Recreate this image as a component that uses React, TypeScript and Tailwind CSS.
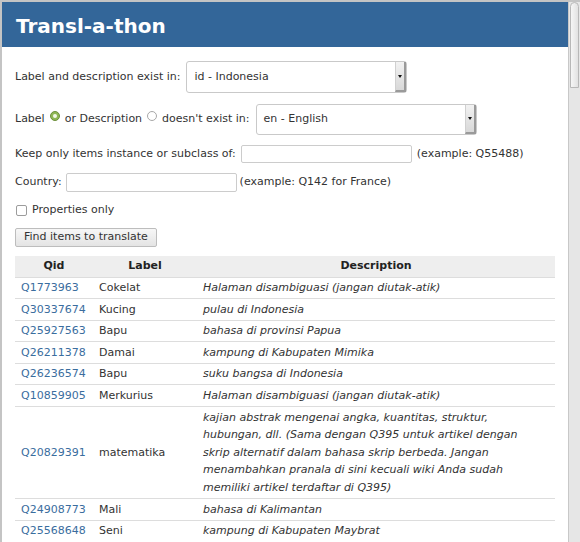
import { FC } from "react";

type Row = { qid: string; label: string; desc: string };

const rows: Row[] = [
  { qid: "Q1773963", label: "Cokelat", desc: "Halaman disambiguasi (jangan diutak-atik)" },
  { qid: "Q30337674", label: "Kucing", desc: "pulau di Indonesia" },
  { qid: "Q25927563", label: "Bapu", desc: "bahasa di provinsi Papua" },
  { qid: "Q26211378", label: "Damai", desc: "kampung di Kabupaten Mimika" },
  { qid: "Q26236574", label: "Bapu", desc: "suku bangsa di Indonesia" },
  { qid: "Q10859905", label: "Merkurius", desc: "Halaman disambiguasi (jangan diutak-atik)" },
  {
    qid: "Q20829391",
    label: "matematika",
    desc: "kajian abstrak mengenai angka, kuantitas, struktur, hubungan, dll. (Sama dengan Q395 untuk artikel dengan skrip alternatif dalam bahasa skrip berbeda. Jangan menambahkan pranala di sini kecuali wiki Anda sudah memiliki artikel terdaftar di Q395)",
  },
  { qid: "Q24908773", label: "Mali", desc: "bahasa di Kalimantan" },
  { qid: "Q25568648", label: "Seni", desc: "kampung di Kabupaten Maybrat" },
];

// fake GTK-ish select box
const Select: FC<{ value: string }> = ({ value }) => (
  <div className="flex h-full w-[221px] rounded-[3px] border border-[#c9c9c9] bg-white">
    <div className="flex flex-1 items-center pl-[7px] text-[11px] text-[#333]">{value}</div>
    <div className="flex w-[11px] items-center justify-center border-l border-[#d0d0d0] border-r-2 border-b-2 border-r-[#9a9a9a] border-b-[#9a9a9a] bg-gradient-to-b from-[#f2f2f2] to-[#d8d8d8]">
      <div className="h-0 w-0 border-x-[2.5px] border-t-[3px] border-x-transparent border-t-[#111]"></div>
    </div>
  </div>
);

const Radio: FC<{ checked?: boolean }> = ({ checked }) =>
  checked ? (
    <span className="relative -top-[3px] mx-[5px] inline-flex h-[10px] w-[10px] items-center justify-center rounded-full border border-[#6d8f3c] bg-[#8fb755] align-middle">
      <span className="h-[4px] w-[4px] rounded-full bg-[#f4f8ea]"></span>
    </span>
  ) : (
    <span className="relative -top-[3px] mx-[5px] inline-block h-[10px] w-[10px] rounded-full border border-[#a8a8a8] bg-white align-middle"></span>
  );

const Input: FC<{ h: string }> = ({ h }) => (
  <div className={`${h} w-[171px] rounded-[2px] border border-[#cccccc] bg-white`}></div>
);

const App: FC = () => {
  return (
    <div className="flex h-[542px] w-[580px] overflow-hidden border-l-2 border-t-2 border-[#c4c4c4] bg-white font-['DejaVu_Sans',sans-serif] text-[11px] text-[#333]">
      <div className="flex-1">
        <div className="flex h-[45px] items-center bg-[#336699] pl-[14px] pt-[2px] text-[20px] font-bold text-white">
          Transl-a-thon
        </div>

        <div className="px-[13px]">
          <div className="mt-[14px] flex h-[32px] items-center">
            <span className="mr-[6px]">Label and description exist in:</span>
            <Select value="id - Indonesia" />
          </div>

          <div className="mt-[11px] flex h-[31px] items-center">
            <span className="mr-[6px] whitespace-nowrap">
              Label
              <Radio checked />
              or Description
              <Radio />
              doesn't exist in:
            </span>
            <Select value="en - English" />
          </div>

          <div className="mt-[10px] flex h-[18px] items-center">
            <span className="mr-[5px]">Keep only items instance or subclass of:</span>
            <Input h="h-[18px]" />
            <span className="ml-[5px]">(example: Q55488)</span>
          </div>

          <div className="mt-[10px] flex h-[19px] items-center">
            <span className="mr-[4px]">Country:</span>
            <Input h="h-[19px]" />
            <span className="ml-[3px]">(example: Q142 for France)</span>
          </div>

          <div className="mt-[10px] flex h-[16px] items-center">
            <span className="ml-[1px] h-[11px] w-[11px] rounded-[2px] border border-[#9c9c9c] bg-white"></span>
            <span className="ml-[5px]">Properties only</span>
          </div>

          <button className="mt-[10px] h-[19px] w-[142px] rounded-[2px] border border-[#bdbdbd] bg-gradient-to-b from-[#f7f7f7] to-[#e4e4e4] pl-[1px] text-left text-[11px] text-[#333]">
            <span className="ml-[7px]">Find items to translate</span>
          </button>

          <table className="mt-[9px] w-[540px] table-fixed border-collapse leading-[17.6px]">
            <colgroup>
              <col className="w-[78px]" />
              <col className="w-[104px]" />
              <col />
            </colgroup>
            <thead>
              <tr className="h-[21px] bg-[#eeeeee] font-bold text-[#222]">
                <th className="text-center">Qid</th>
                <th className="text-center">Label</th>
                <th className="text-center">Description</th>
              </tr>
            </thead>
            <tbody>
              {rows.map((r) => (
                <tr key={r.qid} className="border-t border-[#dddddd]">
                  <td className="px-[6px] py-[1.5px] align-middle text-[#3a6d9e]">{r.qid}</td>
                  <td className="px-[6px] py-[1.5px] align-middle">{r.label}</td>
                  <td className="py-[1.5px] pl-[6px] pr-[20px] align-middle italic">{r.desc}</td>
                </tr>
              ))}
            </tbody>
          </table>
        </div>
      </div>

      {/* scrollbar */}
      <div className="w-[12px] border-l border-[#c8c8c8] bg-[#e6e6e6] px-[1px]">
        <div className="h-[86px] rounded-t-full rounded-b-[3px] border border-[#b8b8b8] bg-gradient-to-r from-[#f6f6f6] to-[#e2e2e2]"></div>
      </div>
    </div>
  );
};

export default App;
